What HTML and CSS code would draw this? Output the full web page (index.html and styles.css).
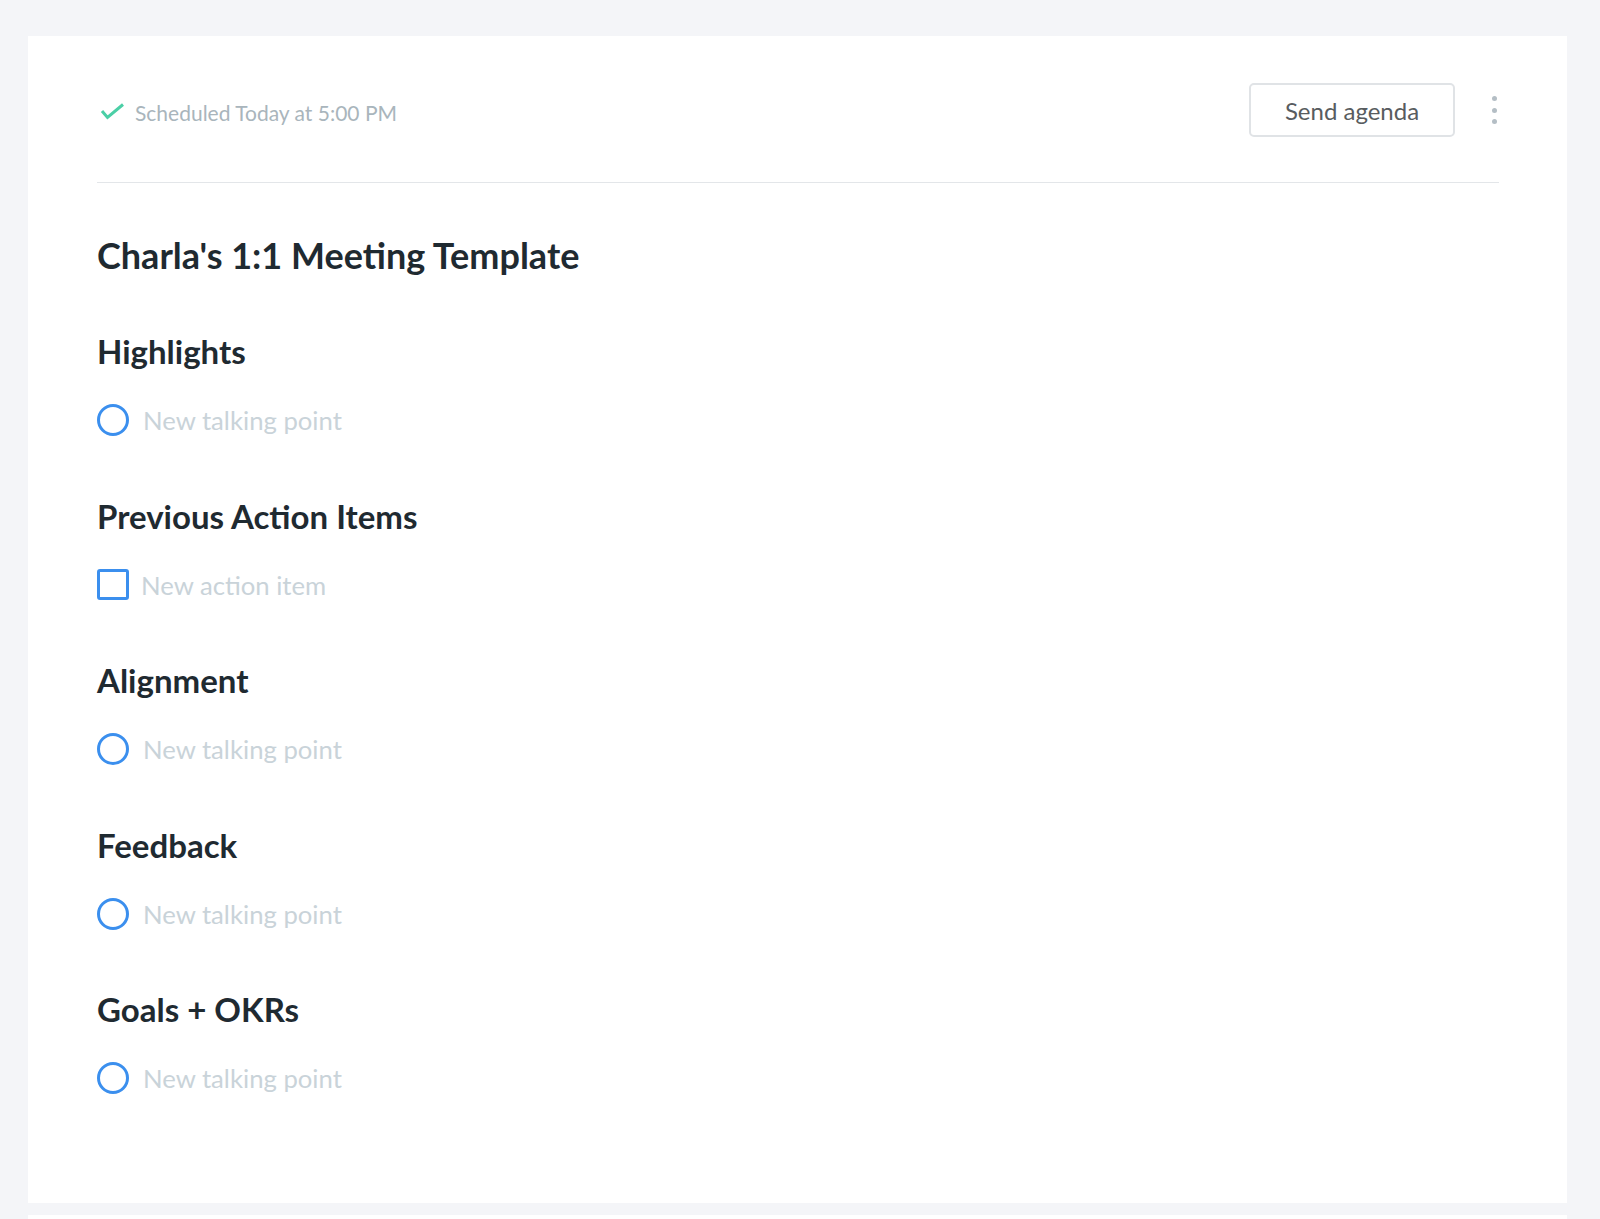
FILE: index.html
```html
<!DOCTYPE html>
<html lang="en">
<head>
    <meta charset="UTF-8">
    <meta name="viewport" content="width=device-width, initial-scale=1.0">
    <title>Charla's 1:1 Meeting Template</title>
    <link rel="stylesheet" href="styles.css">
</head>
<body>
    <main class="card">
        <div class="top-bar">
            <div class="status">
                <svg class="check" width="26" height="18" viewBox="0 0 26 18">
                    <polyline points="2,9 7.5,15.5 23,2.5" fill="none" stroke="#4bcfa6" stroke-width="3"/>
                </svg>
                <span>Scheduled Today at 5:00 PM</span>
            </div>
            <button class="send-btn">Send agenda</button>
            <div class="more">
                <span></span>
                <span></span>
                <span></span>
            </div>
        </div>

        <h1 class="title">Charla's 1:1 Meeting Template</h1>

        <section class="block">
            <h2>Highlights</h2>
            <div class="item">
                <span class="circle"></span>
                <p>New talking point</p>
            </div>
        </section>

        <section class="block">
            <h2>Previous Action Items</h2>
            <div class="item action">
                <span class="box"></span>
                <p>New action item</p>
            </div>
        </section>

        <section class="block">
            <h2>Alignment</h2>
            <div class="item">
                <span class="circle"></span>
                <p>New talking point</p>
            </div>
        </section>

        <section class="block">
            <h2>Feedback</h2>
            <div class="item">
                <span class="circle"></span>
                <p>New talking point</p>
            </div>
        </section>

        <section class="block">
            <h2>Goals + OKRs</h2>
            <div class="item">
                <span class="circle"></span>
                <p>New talking point</p>
            </div>
        </section>
    </main>
    <div class="card next"></div>
</body>
</html>
```

FILE: styles.css
```css
body{
    margin: 0;
    background-color: #f4f5f8;
    font-family: Lato, "Open Sans", "Liberation Sans", sans-serif;
    overflow: hidden;
}
.card{
    background-color: #fff;
    margin: 36px 33px 0 28px;
    height: 1167px;
    padding: 47px 68px 0 69px;
    box-sizing: border-box;
}
.card.next{
    margin-top: 12px;
    height: 4px;
}
.top-bar{
    display: flex;
    align-items: center;
    height: 54px;
    padding-bottom: 45px;
    border-bottom: 1px solid #e3e6e9;
}
.status{
    flex: 1;
    display: flex;
    align-items: center;
    padding-top: 4px;
    color: #a9b5bc;
    font-size: 21px;
}
.check{
    margin-left: 3px;
    margin-right: 9px;
    margin-top: -2px;
}
.send-btn{
    width: 206px;
    height: 54px;
    border: 2px solid #e0e3e6;
    border-radius: 5px;
    background: #fff;
    color: #585c60;
    font-family: inherit;
    font-size: 24px;
    padding: 0;
}
.more{
    width: 10px;
    margin-left: 34px;
    display: flex;
    flex-direction: column;
    align-items: center;
    gap: 6.5px;
}
.more span{
    width: 5px;
    height: 5px;
    border-radius: 50%;
    background-color: #b4bec5;
}
.title{
    margin: 50px 0 0;
    font-size: 36px;
    line-height: 44px;
    font-weight: 700;
    color: #1f2a31;
}
.block{
    margin-top: 56px;
}
.block + .block{
    margin-top: 61.5px;
}
.block h2{
    margin: 0;
    font-size: 33px;
    line-height: 36px;
    font-weight: 700;
    color: #1f2a31;
}
.item{
    display: flex;
    align-items: center;
    gap: 14px;
    margin-top: 35px;
    height: 32px;
}
.item.action{
    gap: 12px;
}
.item p{
    margin: 0;
    font-size: 25.7px;
    line-height: 32px;
    color: #c9d3d9;
}
.circle{
    width: 32px;
    height: 32px;
    box-sizing: border-box;
    border: 3px solid #3b8fee;
    border-radius: 50%;
}
.box{
    width: 32px;
    height: 31px;
    box-sizing: border-box;
    border: 3px solid #3b8fee;
    border-radius: 3px;
}
```
